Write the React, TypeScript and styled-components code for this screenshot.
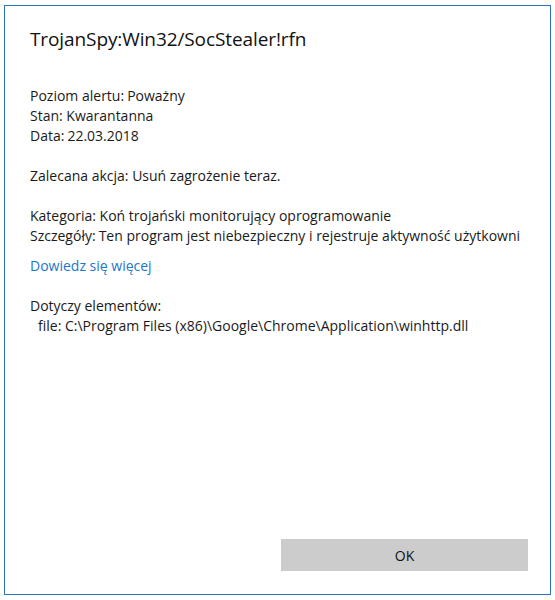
import React from "react";
import styled, { createGlobalStyle } from "styled-components";

const Global = createGlobalStyle`
  html, body { margin: 0; padding: 0; background: #ffffff; }
  body { font-family: "Open Sans", "Noto Sans", "Liberation Sans", sans-serif; color: #1a1a1a; }
`;

const Page = styled.div`
  width: 555px;
  height: 600px;
  padding: 5px 0 0 4px;
  box-sizing: border-box;
`;

const Dialog = styled.div`
  width: 547px;
  height: 590px;
  box-sizing: border-box;
  border: 1px solid #2b74b8;
  background: #ffffff;
  display: flex;
  flex-direction: column;
  padding: 19px 22px 23px 25px;
`;

const Title = styled.h1`
  margin: 0;
  font-size: 19px;
  font-weight: 400;
  line-height: 28px;
  letter-spacing: -0.1px;
  color: #111111;
`;

const Body = styled.div`
  flex: 1;
  overflow: hidden;
  font-size: 14px;
  line-height: 20px;
  white-space: nowrap;
  padding-top: 33px;
`;

const Group = styled.div<{ $gap?: number }>`
  margin-top: ${(p) => p.$gap ?? 0}px;
`;

const Line = styled.div<{ $indent?: boolean }>`
  padding-left: ${(p) => (p.$indent ? 8 : 0)}px;
`;

const Value = styled.span`
  margin-left: 3px;
`;

const Link = styled.a`
  display: block;
  color: #1c76c9;
  text-decoration: none;
  font-size: 14px;
  line-height: 20px;
`;

const Footer = styled.div`
  display: flex;
  justify-content: flex-end;
`;

const Button = styled.button`
  width: 247px;
  height: 32px;
  border: none;
  background: #cccccc;
  font-family: inherit;
  font-size: 14px;
  color: #111111;
  padding: 0;
`;

export default function App() {
  return (
    <>
      <Global />
      <Page>
        <Dialog>
          <Title>TrojanSpy:Win32/SocStealer!rfn</Title>
          <Body>
            <Group>
              <Line>Poziom alertu:<Value>Poważny</Value></Line>
              <Line>Stan: Kwarantanna</Line>
              <Line>Data:<Value>22.03.2018</Value></Line>
            </Group>
            <Group $gap={20}>
              <Line>Zalecana akcja: Usuń zagrożenie teraz.</Line>
            </Group>
            <Group $gap={20}>
              <Line>Kategoria: Koń trojański monitorujący oprogramowanie</Line>
              <Line>Szczegóły:<Value>Ten program jest niebezpieczny i rejestruje aktywność użytkowni</Value></Line>
            </Group>
            <Group $gap={10}>
              <Link href="#">Dowiedz się więcej</Link>
            </Group>
            <Group $gap={20}>
              <Line>Dotyczy elementów:</Line>
              <Line $indent>file: C:\Program Files (x86)\Google\Chrome\Application\winhttp.dll</Line>
            </Group>
          </Body>
          <Footer>
            <Button>OK</Button>
          </Footer>
        </Dialog>
      </Page>
    </>
  );
}
